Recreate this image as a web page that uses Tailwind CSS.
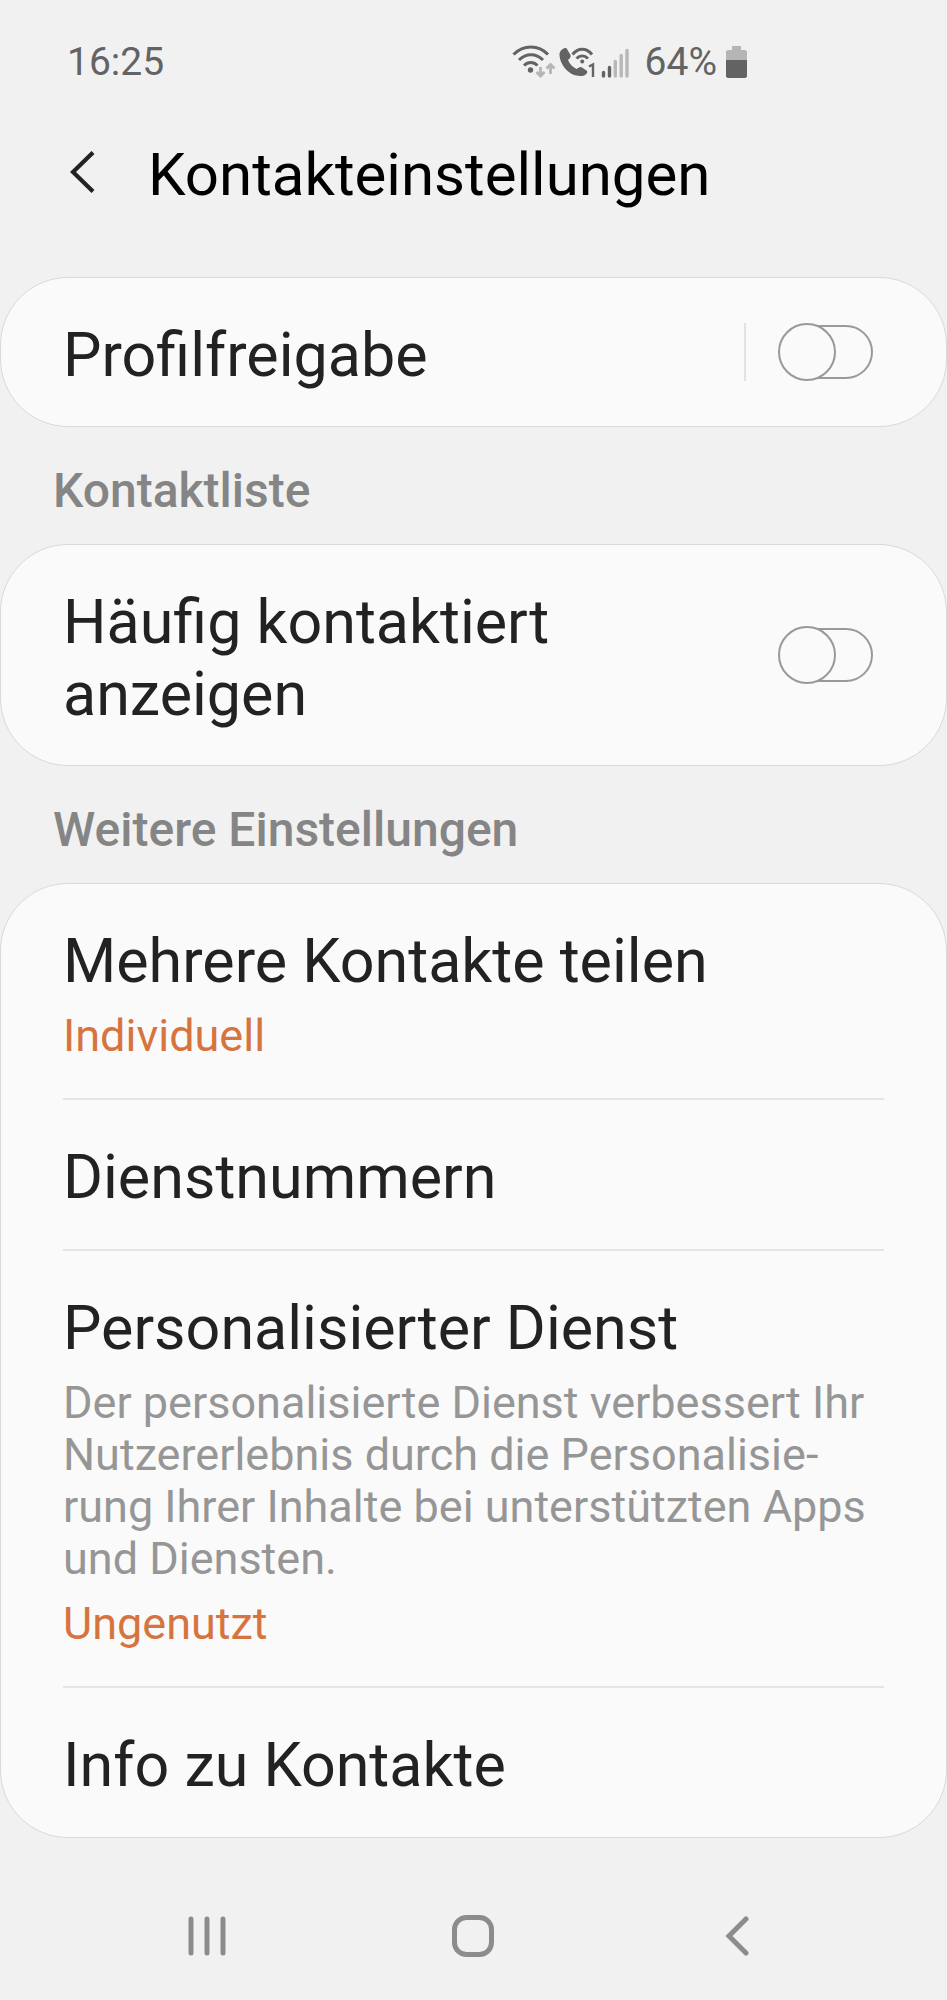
<!DOCTYPE html>
<html lang="de">
<head>
    <meta charset="UTF-8">
    <meta name="viewport" content="width=device-width, initial-scale=1.0">
    <title>Kontakteinstellungen</title>
    <script src="https://cdn.jsdelivr.net/npm/@tailwindcss/browser@4"></script>
</head>
<body class="bg-[#f1f1f1] font-[Roboto,'Liberation_Sans',sans-serif] text-[#222]">
    <!-- Statusleiste -->
    <div class="flex items-center justify-between pt-[39px] pl-[67px] pr-[200px] text-[39px] leading-[46px] text-[#636363]">
        <span>16:25</span>
        <div class="flex items-center">
            <!-- WLAN -->
            <svg class="w-[44px] h-[34px]" viewBox="0 0 44 34" fill="none">
                <g stroke="#636363" stroke-width="3">
                    <path d="M1.500 9.500C11.500 -.5 26.500 -.5 36 9.500"/>
                    <path d="M7 15C14 8 24 8 31 15"/>
                    <path d="M12 20.500C16 16.500 21.500 16.500 25.500 20.500"/>
                </g>
                <circle cx="18.500" cy="25" r="2.700" fill="#636363"/>
                <g stroke="#b5b5b5" stroke-width="2.800">
                    <path d="M28.500 22v9M24.500 27l4 4 4-4M38.500 29v-9M34.500 23.500l4-4 4 4"/>
                </g>
            </svg>
            <!-- WLAN-Anruf -->
            <svg class="ml-[3px] w-[38px] h-[34px]" viewBox="0 0 38 34">
                <path fill="#636363" d="M1 7C2 5 4 3.500 6 3c1 0 1.500.3 2 1l3.500 6c.5 1 .2 2-.5 3l-2 2c1.500 4 4.500 7 8.500 9l2.500-1.500c1-.7 2-.7 3 0l4.500 3c1 .7 1 1.700.5 2.500-1.500 2.500-4 3-6.500 3C10 31 1 20 .5 10c0-1 0-2 .5-3z"/>
                <g fill="none" stroke="#636363" stroke-width="3">
                    <path d="M13.500 9.500C19 2.500 27.500 2.500 33 9.500"/>
                    <path d="M17.500 13.500C21 10 25.500 10 29 13.500"/>
                </g>
                <circle cx="23.200" cy="16.500" r="2" fill="#636363"/>
                <path d="M30 21.500l4-2v12.500" fill="none" stroke="#636363" stroke-width="2.400"/>
            </svg>
            <!-- Empfang -->
            <svg class="ml-[4px] w-[28px] h-[34px]" viewBox="0 0 28 34" stroke-width="3.400" stroke-linecap="round">
                <path stroke="#636363" d="M2.500 27.500v3.500M8.500 22.500v8.500"/>
                <path stroke="#b8b8b8" d="M14.300 16.500v14.500M20.200 10.500v20.500M26 5.500v25.500"/>
            </svg>
            <span class="ml-4">64%</span>
            <!-- Akku -->
            <svg class="ml-[9px] w-[21px] h-[32px]" viewBox="0 0 21 32">
                <path fill="#b5b5b5" d="M6 0h9v4h4.500L21 5.500V15H0V5.500L1.500 4H6z"/>
                <path fill="#636363" d="M0 14h21v16.500L19.500 32h-18L0 30.500z"/>
            </svg>
        </div>
    </div>

    <header class="flex items-center pt-[49px] pb-[67px] pl-[70px]">
        <button type="button" aria-label="Zurück">
            <svg class="w-[25px] h-[42px]" viewBox="0 0 25 42" fill="none" stroke="#222" stroke-width="4.200">
                <path d="M23 1.500L3 21l20 19.500"/>
            </svg>
        </button>
        <h1 class="ml-[53px] pt-[6px] text-[60px] leading-[70px] text-black">Kontakteinstellungen</h1>
    </header>

    <main>
        <section class="rounded-[68px] border border-[#d9d9d9] bg-[#fafafa]">
            <div class="flex items-center pl-[62px] pr-[73px]">
                <label for="profil" class="flex-1 pt-[41px] pb-[35px] text-[61px] leading-[72px]">Profilfreigabe</label>
                <div class="flex h-[58px] items-center border-l-2 border-[#e2e2e2] pl-[34px]">
                    <input type="checkbox" role="switch" id="profil" class="relative h-[54px] w-[93px] appearance-none rounded-full border-2 border-[#999] before:absolute before:-top-[4px] before:-left-[4px] before:size-[58px] before:rounded-full before:border-2 before:border-[#999] before:bg-[#fafafa]">
                </div>
            </div>
        </section>

        <h2 class="pt-9 pb-[25px] pl-[53px] text-[48px] leading-[56px] font-medium text-[#858585]">Kontaktliste</h2>
        <section class="rounded-[68px] border border-[#d9d9d9] bg-[#fafafa]">
            <div class="flex items-center pl-[62px] pr-[73px]">
                <label for="haeufig" class="flex-1 pt-[41px] pb-[35px] text-[61px] leading-[72px]">Häufig kontaktiert anzeigen</label>
                <div class="flex h-[58px] items-center pl-[36px]">
                    <input type="checkbox" role="switch" id="haeufig" class="relative h-[54px] w-[93px] appearance-none rounded-full border-2 border-[#999] before:absolute before:-top-[4px] before:-left-[4px] before:size-[58px] before:rounded-full before:border-2 before:border-[#999] before:bg-[#fafafa]">
                </div>
            </div>
        </section>

        <h2 class="pt-9 pb-[25px] pl-[53px] text-[48px] leading-[56px] font-medium text-[#858585]">Weitere Einstellungen</h2>
        <section class="rounded-[68px] border border-[#d9d9d9] bg-[#fafafa] px-[62px]">
            <a href="#" class="block border-b-2 border-[#e4e4e4] pt-[41px] pb-9">
                <h3 class="text-[61px] leading-[72px]">Mehrere Kontakte teilen</h3>
                <p class="mt-[13px] text-[45px] leading-[52px] text-[#d6743f]">Individuell</p>
            </a>
            <a href="#" class="block border-b-2 border-[#e4e4e4] pt-[41px] pb-9">
                <h3 class="text-[61px] leading-[72px]">Dienstnummern</h3>
            </a>
            <a href="#" class="block border-b-2 border-[#e4e4e4] pt-[41px] pb-9">
                <h3 class="text-[61px] leading-[72px]">Personalisierter Dienst</h3>
                <p class="mt-[13px] text-[45px] leading-[52px] text-[#969696]">Der personalisierte Dienst verbessert Ihr Nutzererlebnis durch die Personalisie&shy;rung Ihrer Inhalte bei unterstützten Apps und Diensten.</p>
                <p class="mt-[13px] text-[45px] leading-[52px] text-[#d6743f]">Ungenutzt</p>
            </a>
            <a href="#" class="block pt-[41px] pb-9">
                <h3 class="text-[61px] leading-[72px]">Info zu Kontakte</h3>
            </a>
        </section>
    </main>

    <!-- Navigationsleiste -->
    <nav class="flex items-center justify-between pt-[77px] pb-[42px] pl-[188px] pr-[198px]">
        <button type="button" aria-label="Letzte Apps">
            <svg class="w-[38px] h-[42px]" viewBox="0 0 38 42" stroke="#8c8c8c" stroke-width="5" stroke-linecap="round">
                <path d="M3 4v34M19 4v34M35 4v34"/>
            </svg>
        </button>
        <button type="button" aria-label="Startseite">
            <svg class="w-[42px] h-[42px]" viewBox="0 0 42 42" fill="none" stroke="#8c8c8c" stroke-width="5">
                <rect x="2.500" y="2.500" width="37" height="37" rx="12"/>
            </svg>
        </button>
        <button type="button" aria-label="Zurück">
            <svg class="w-[30px] h-[42px]" viewBox="0 0 30 42" fill="none" stroke="#8c8c8c" stroke-width="5" stroke-linecap="round">
                <path d="M27 4L10 21l17 17"/>
            </svg>
        </button>
    </nav>
</body>
</html>
